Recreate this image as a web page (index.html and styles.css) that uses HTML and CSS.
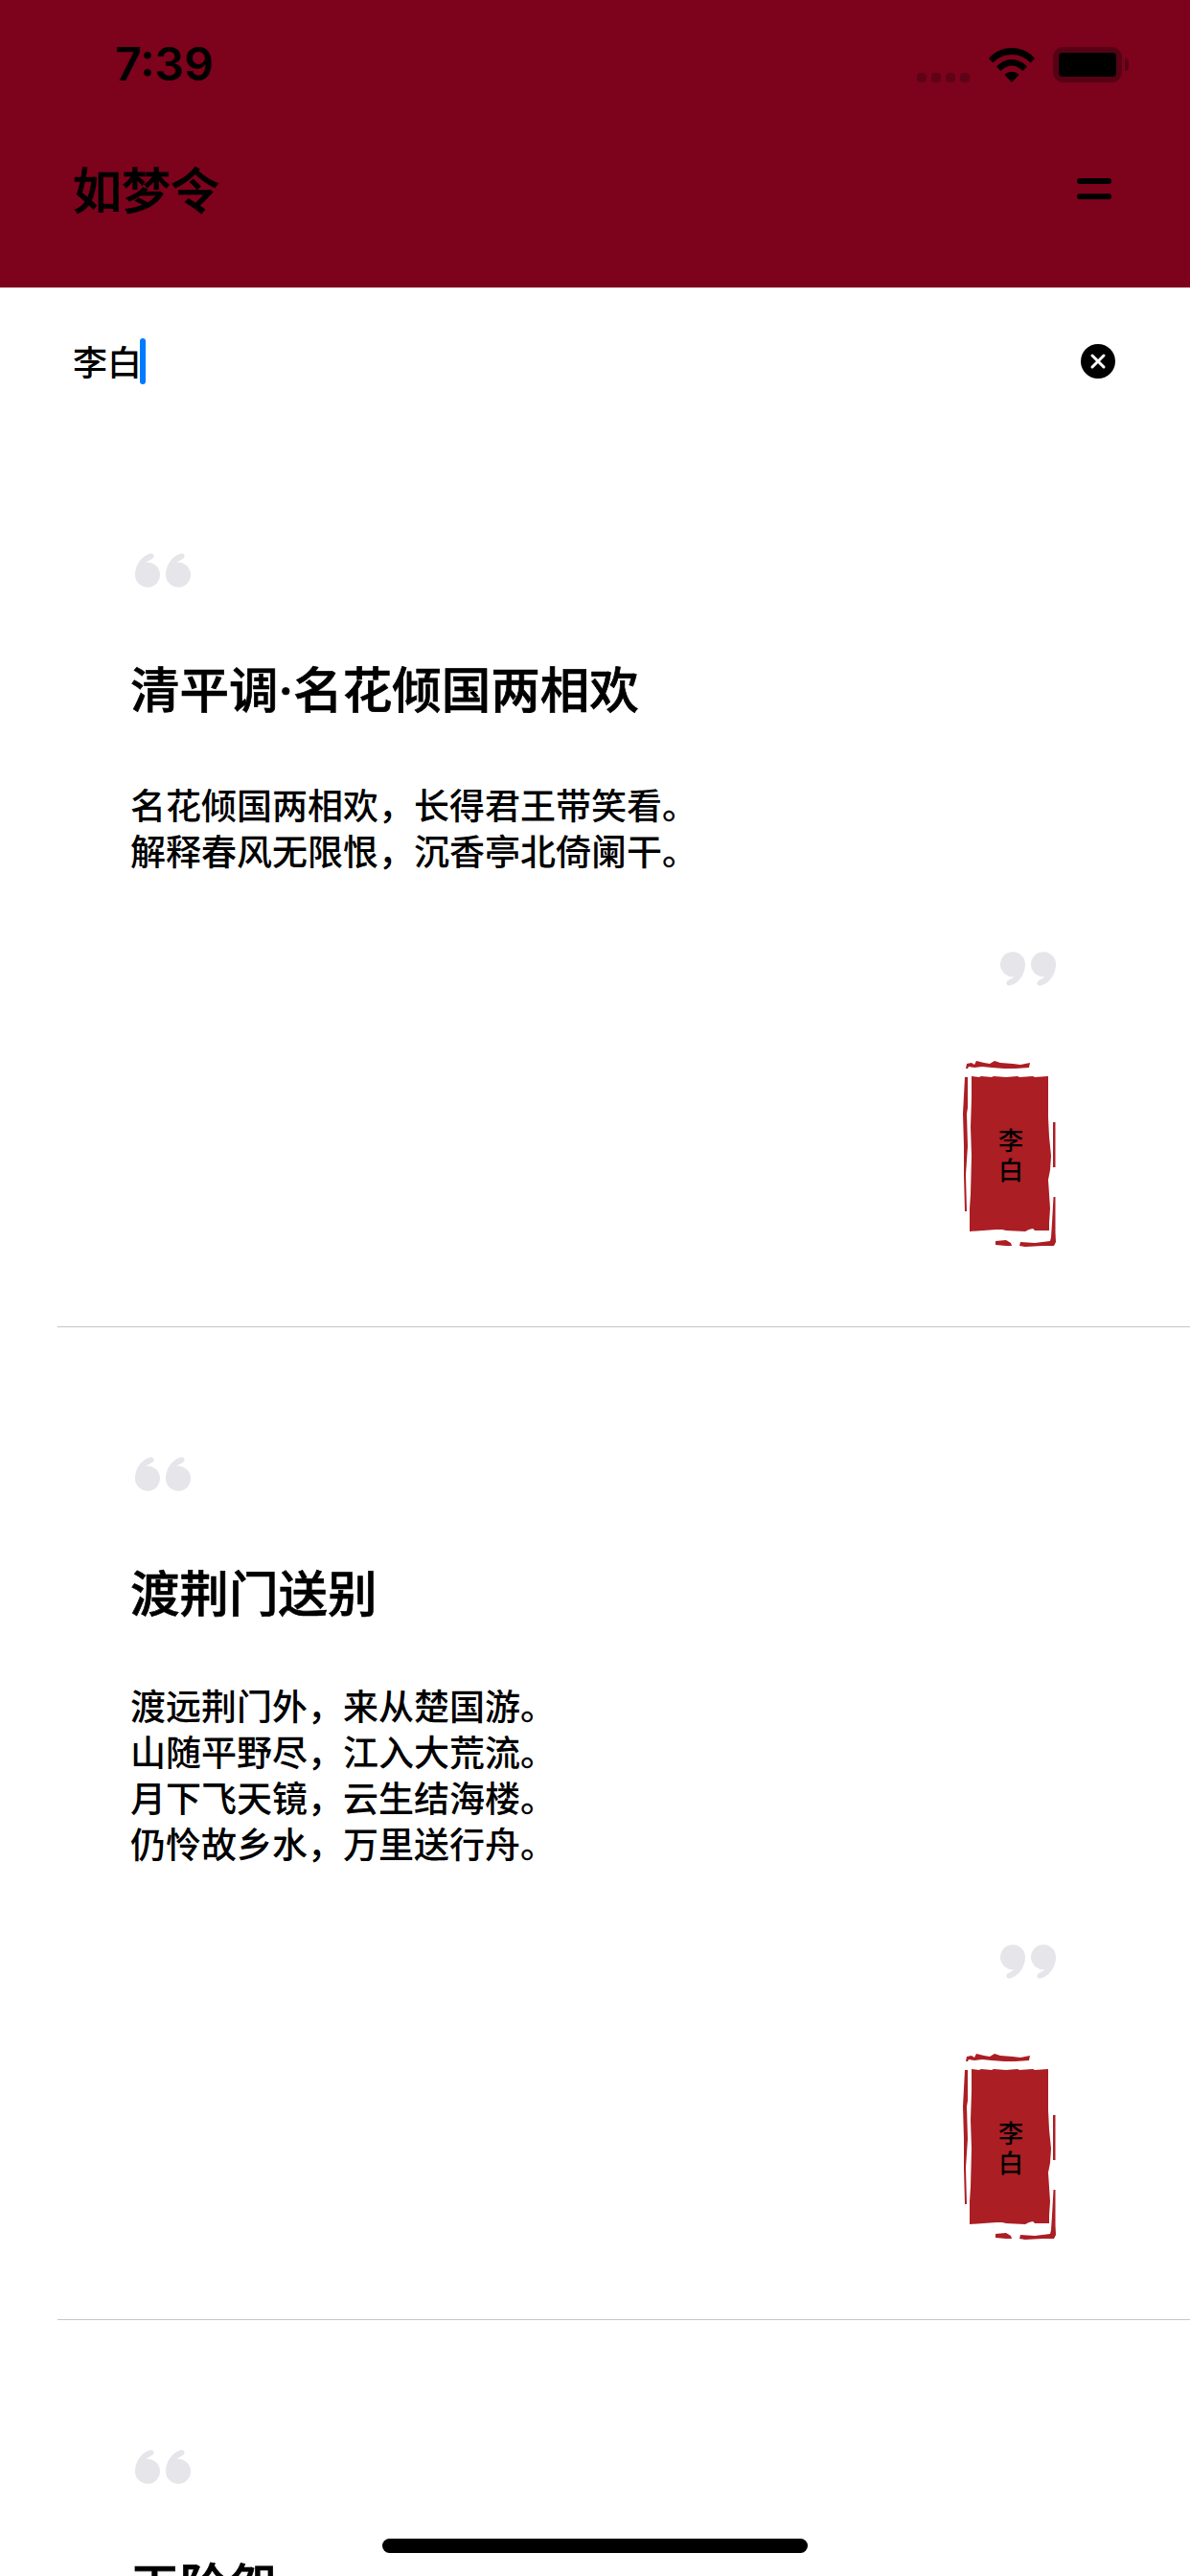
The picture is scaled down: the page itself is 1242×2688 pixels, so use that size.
FILE: index.html
```html
<!DOCTYPE html>
<html lang="zh-CN">
<head>
    <meta charset="UTF-8">
    <meta name="viewport" content="width=device-width, initial-scale=1.0">
    <title>如梦令</title>
    <link rel="stylesheet" href="styles.css">
</head>
<body>

<svg class="defs" width="0" height="0">
    <symbol id="quote-mark" viewBox="0 0 58 36">
        <path d="M0 23C0 12 7 3 16 .5C19-.3 21 3.5 18.5 5.5C15 7.5 12.5 9 11 10A13 13 0 1 1 0 23Z"/>
        <path d="M32 23C32 12 39 3 48 .5C51-.3 53 3.5 50.5 5.5C47 7.5 44.5 9 43 10A13 13 0 1 1 32 23Z"/>
    </symbol>
    <symbol id="seal-mark" viewBox="0 0 102 210">
        <path d="M14 27L22 28L24 27L35 28L37 27L50 28L62 27L64 28L78 27L80 28L94 27L94 70L95 90L97 110L96 125L94 135L95 150L96 165L95 180L95 188L80 188L78 186L74 187L70 189L50 188L46 187L40 187L12 189L12 165L13 150L14 110L13 80L14 50Z"/>
        <path d="M8 19L9 14L14 13L17 15L19 11L27 13L33 14L38 11L44 13L57 14L65 15L75 13L74 18L60 19L48 19L35 18L25 17L17 18L11 17L10 19Z"/>
        <path d="M7 28L10 28L10 60L9 66L10 100L8 130L9 168L7 168L6 130L6 100L5 66Z"/>
        <path d="M99 75L101.500 75L101.500 122L99 122Z"/>
        <path d="M99.500 153L101.500 153L101.500 190L102 200L100 204L88 204L70 205L64 204L65 200L80 201L96 199L97 195L98 180Z"/>
        <path d="M39 199L50 198L55 201L56 204L50 204L39 203Z"/>
    </symbol>
</svg>

<header class="app-header">
    <div class="status-bar">
        <span class="status-time">7:39</span>
        <div class="status-icons">
            <div class="signal"><i></i><i></i><i></i><i></i></div>
            <svg class="wifi" viewBox="0 0 48 36">
                <path d="M0 11C6 4 14 0 24 0C34 0 42 4 48 11L43.500 15.500C38 10 32 7 24 7C16 7 10 10 4.500 15.500Z"/>
                <path d="M8 19.500C12 15 18 12 24 12C30 12 36 15 40 19.500L35.500 24C32 20.500 28 18.500 24 18.500C20 18.500 16 20.500 12.500 24Z"/>
                <path d="M16.500 28C18.500 26 21 25 24 25C27 25 29.500 26 31.500 28L24 36Z"/>
            </svg>
            <div class="battery">
                <div class="battery-body"><div class="battery-level"></div></div>
                <div class="battery-nub"></div>
            </div>
        </div>
    </div>
    <div class="nav-bar">
        <h1>如梦令</h1>
        <div class="menu-button"><span></span><span></span></div>
    </div>
</header>

<div class="search-row">
    <div class="search-text">李白<span class="caret"></span></div>
    <svg class="clear-icon" viewBox="0 0 36 36">
        <circle cx="18" cy="18" r="18"/>
        <path d="M12 12L24 24M24 12L12 24"/>
    </svg>
</div>

<div class="poem-list">
    <div class="poem">
        <svg class="quote"><use href="#quote-mark"/></svg>
        <h2>清平调<span class="title-dot">·</span>名花倾国两相欢</h2>
        <p>名花倾国两相欢，长得君王带笑看。<br>解释春风无限恨，沉香亭北倚阑干。</p>
        <svg class="quote quote-close"><use href="#quote-mark"/></svg>
        <div class="seal">
            <svg class="seal-bg"><use href="#seal-mark"/></svg>
            <span class="seal-name">李<br>白</span>
        </div>
    </div>
    <div class="poem">
        <svg class="quote"><use href="#quote-mark"/></svg>
        <h2>渡荆门送别</h2>
        <p>渡远荆门外，来从楚国游。<br>山随平野尽，江入大荒流。<br>月下飞天镜，云生结海楼。<br>仍怜故乡水，万里送行舟。</p>
        <svg class="quote quote-close"><use href="#quote-mark"/></svg>
        <div class="seal">
            <svg class="seal-bg"><use href="#seal-mark"/></svg>
            <span class="seal-name">李<br>白</span>
        </div>
    </div>
    <div class="poem">
        <svg class="quote"><use href="#quote-mark"/></svg>
        <h2>玉阶怨</h2>
    </div>
</div>

<div class="home-indicator"></div>

</body>
</html>
```

FILE: styles.css
```css
html, body {
    height: 2688px;
}
body {
    margin: 0;
    overflow: hidden;
    position: relative;
    background: #fff;
    color: #000;
    font-family: "Noto Sans CJK SC", "Noto Sans", sans-serif;
    font-weight: 500;
}
.defs {
    position: absolute;
}

.app-header {
    height: 300px;
    background: #7d021c;
}
.status-bar {
    height: 134px;
    padding: 0 64px 0 120px;
    display: flex;
    justify-content: space-between;
    align-items: center;
}
.status-time {
    font-family: Inter, sans-serif;
    font-size: 48px;
    font-weight: 600;
    line-height: 36px;
}
.status-icons {
    display: flex;
    align-items: flex-end;
}
.signal {
    display: flex;
    gap: 5px;
    margin-right: 20px;
}
.signal i {
    width: 10px;
    height: 10px;
    border-radius: 4px;
    background: #5e0217;
}
.wifi {
    width: 48px;
    height: 36px;
    margin-right: 19px;
}
.battery {
    display: flex;
    align-items: center;
    gap: 3px;
}
.battery-body {
    width: 72px;
    height: 37px;
    box-sizing: border-box;
    border: 6px solid #560214;
    border-radius: 11px;
}
.battery-level {
    height: 100%;
    background: #000;
    border-radius: 4px;
}
.battery-nub {
    width: 4px;
    height: 13px;
    background: #560214;
    border-radius: 0 5px 5px 0;
}

.nav-bar {
    margin-top: 32px;
    padding: 0 82px 0 76px;
    display: flex;
    justify-content: space-between;
    align-items: center;
}
.nav-bar h1 {
    margin: 0;
    font-size: 51px;
    font-weight: 500;
    -webkit-text-stroke: 0.7px #000;
    line-height: 60px;
}
.menu-button {
    display: flex;
    flex-direction: column;
    gap: 10px;
    margin-top: 2px;
}
.menu-button span {
    width: 36px;
    height: 6px;
    border-radius: 3px;
    background: #000;
}

.search-row {
    padding: 53px 78px 41px 76px;
    display: flex;
    justify-content: space-between;
    align-items: center;
}
.search-text {
    font-size: 36px;
    line-height: 46px;
    display: flex;
}
.caret {
    width: 6px;
    height: 48px;
    margin-left: -2px;
    border-radius: 3px;
    background: #007aff;
}
.clear-icon {
    width: 36px;
    height: 36px;
}
.clear-icon path {
    fill: none;
    stroke: #fff;
    stroke-width: 3;
    stroke-linecap: round;
}

.poem-list {
    margin-left: 60px;
}
.poem {
    padding: 135px 140px 78px 76px;
    border-bottom: 1px solid #c6c6c8;
    display: flex;
    flex-direction: column;
}
.quote {
    width: 58px;
    height: 36px;
    margin-left: 5px;
    fill: #e5e5ea;
}
.quote-close {
    align-self: flex-end;
    margin-top: 82px;
    transform: rotate(180deg);
}
.poem h2 {
    margin: 74px 0 0;
    font-size: 51.5px;
    font-weight: 500;
    -webkit-text-stroke: 0.7px #000;
    line-height: 60px;
}
.title-dot {
    font-family: Inter, sans-serif;
}
.poem p {
    margin: 65px 0 0;
    font-size: 37px;
    line-height: 48px;
}
.seal {
    align-self: flex-end;
    position: relative;
    width: 102px;
    height: 210px;
    margin-top: 67px;
    box-sizing: border-box;
    padding: 6px 0 0 8px;
    display: flex;
    justify-content: center;
    align-items: center;
}
.seal-bg {
    position: absolute;
    top: 0;
    left: 0;
    width: 102px;
    height: 210px;
    fill: #ab1e24;
}
.seal-name {
    position: relative;
    font-size: 26px;
    line-height: 31px;
    text-align: center;
}

.home-indicator {
    position: absolute;
    left: 399px;
    top: 2649px;
    width: 444px;
    height: 15px;
    border-radius: 8px;
    background: #000;
}
```
